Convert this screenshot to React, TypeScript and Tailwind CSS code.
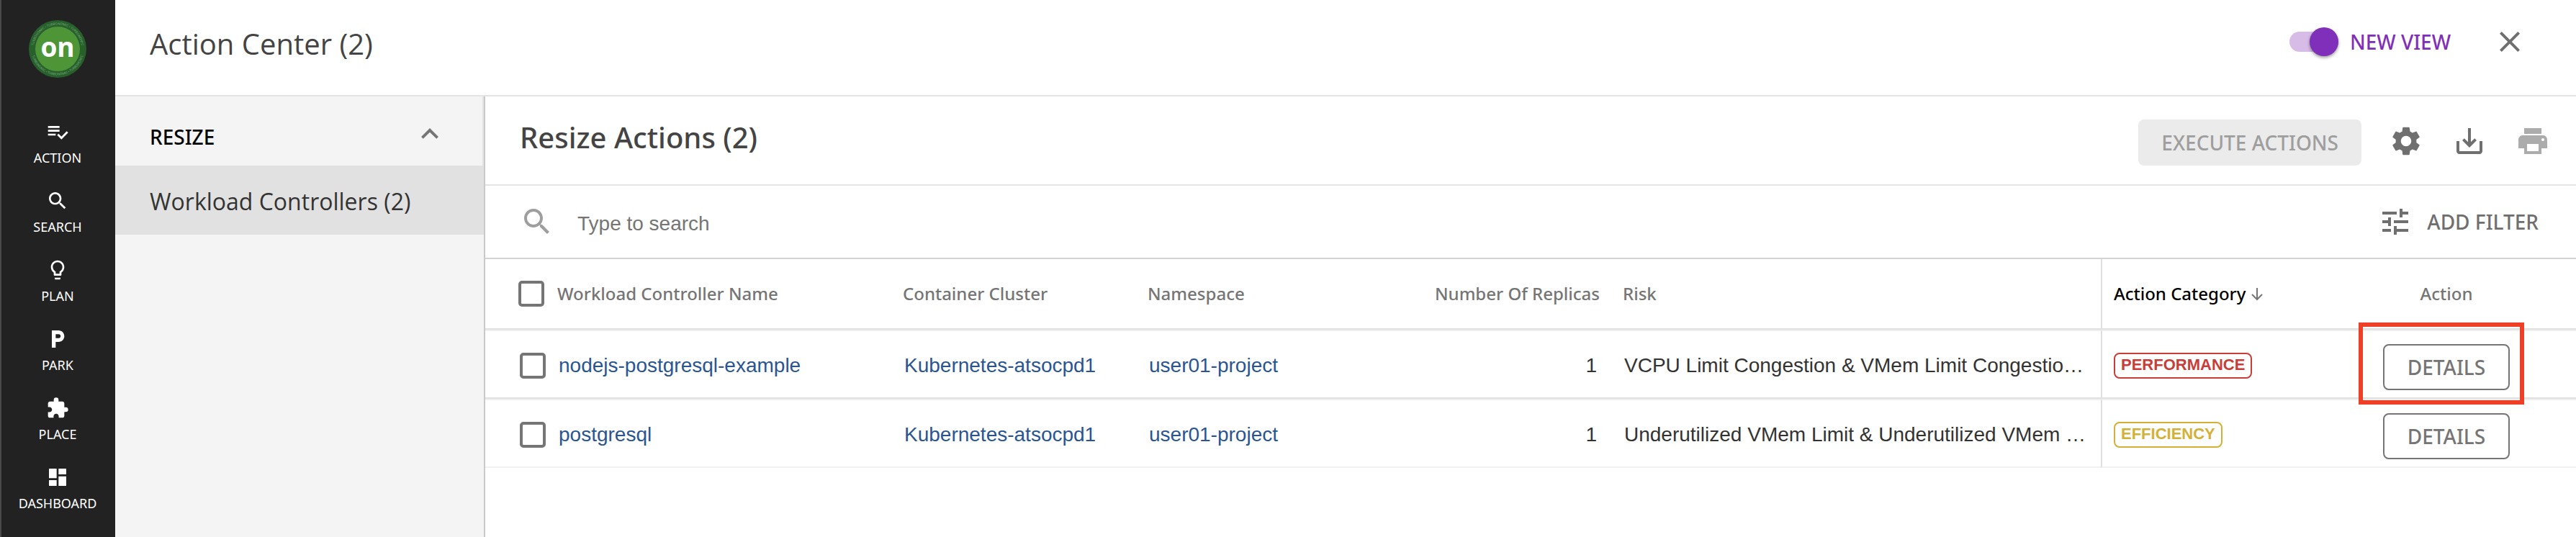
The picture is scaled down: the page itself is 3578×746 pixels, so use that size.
import React from "react";

const SANS = "font-['Open_Sans','Noto_Sans',sans-serif]";
const MEDIUM = "font-['Noto_Sans','Open_Sans',sans-serif] font-medium";

function Icon({ d, className }: { d: string; className: string }) {
  return (
    <svg viewBox="0 0 24 24" fill="currentColor" aria-hidden="true" className={`shrink-0 ${className}`}>
      <path d={d} />
    </svg>
  );
}

const SEARCH =
  "M15.5 14h-.79l-.28-.27C15.41 12.59 16 11.11 16 9.5 16 5.91 13.09 3 9.5 3S3 5.91 3 9.5 5.91 16 9.5 16c1.61 0 3.09-.59 4.23-1.57l.27.28v.79l5 4.99L20.49 19l-4.99-5zm-6 0C7.01 14 5 11.99 5 9.5S7.01 5 9.5 5 14 7.01 14 9.5 11.99 14 9.5 14z";
const CLOSE =
  "M19 6.41L17.59 5 12 10.59 6.41 5 5 6.41 10.59 12 5 17.59 6.41 19 12 13.41 17.59 19 19 17.59 13.41 12z";
const CHEVRON_UP = "M7.41 15.41L12 10.83l4.59 4.58L18 14l-6-6-6 6z";
const GEAR =
  "M19.14 12.94c.04-.3.06-.61.06-.94 0-.32-.02-.64-.07-.94l2.03-1.58a.49.49 0 0 0 .12-.61l-1.92-3.32a.488.488 0 0 0-.59-.22l-2.39.96c-.5-.38-1.03-.7-1.62-.94l-.36-2.54a.484.484 0 0 0-.48-.41h-3.84c-.24 0-.43.17-.47.41l-.36 2.54c-.59.24-1.13.57-1.62.94l-2.39-.96c-.22-.08-.47 0-.59.22L2.74 8.87c-.12.21-.08.47.12.61l2.03 1.58c-.05.3-.09.63-.09.94s.02.64.07.94l-2.03 1.58a.49.49 0 0 0-.12.61l1.92 3.32c.12.22.37.29.59.22l2.39-.96c.5.38 1.03.7 1.62.94l.36 2.54c.05.24.24.41.48.41h3.84c.24 0 .44-.17.47-.41l.36-2.54c.59-.24 1.13-.56 1.62-.94l2.39.96c.22.08.47 0 .59-.22l1.92-3.32c.12-.22.07-.47-.12-.61l-2.01-1.58zM12 15.6c-1.98 0-3.6-1.62-3.6-3.6s1.62-3.6 3.6-3.6 3.6 1.62 3.6 3.6-1.62 3.6-3.6 3.6z";
const DOWNLOAD =
  "M19 12v7H5v-7H3v7c0 1.1.9 2 2 2h14c1.1 0 2-.9 2-2v-7h-2zm-6 .67l2.59-2.58L17 11.5l-5 5-5-5 1.41-1.41L11 12.67V3h2z";
const PRINT =
  "M19 8H5c-1.66 0-3 1.34-3 3v6h4v4h12v-4h4v-6c0-1.66-1.34-3-3-3zm-3 11H8v-5h8v5zm3-7c-.55 0-1-.45-1-1s.45-1 1-1 1 .45 1 1-.45 1-1 1zm-1-9H6v4h12V3z";
const TUNE =
  "M3 17v2h6v-2H3zM3 5v2h10V5H3zm10 16v-2h8v-2h-8v-2h-2v6h2zM7 9v2H3v2h4v2h2V9H7zm14 4v-2H11v2h10zm-6-4h2V7h4V5h-4V3h-2v6z";
const ARROW_DOWN = "M12 4v16M5 13l7 7 7-7";

const NAV = [
  {
    label: "ACTION",
    d: "M14 10H2v2h12v-2zm0-4H2v2h12V6zM2 16h8v-2H2v2zm19.5-4.5L23 13l-6.99 7-4.51-4.5L13 14l3.01 3 5.49-5.5z",
  },
  { label: "SEARCH", d: SEARCH },
  {
    label: "PLAN",
    d: "M9 21c0 .55.45 1 1 1h4c.55 0 1-.45 1-1v-1H9v1zm3-19C8.14 2 5 5.14 5 9c0 2.38 1.19 4.47 3 5.74V17c0 .55.45 1 1 1h6c.55 0 1-.45 1-1v-2.26c1.81-1.27 3-3.36 3-5.74 0-3.86-3.14-7-7-7zm2.85 11.1l-.85.6V16h-4v-2.3l-.85-.6A4.997 4.997 0 0 1 7 9c0-2.76 2.24-5 5-5s5 2.24 5 5c0 1.63-.8 3.16-2.15 4.1z",
  },
  { label: "PARK", d: "M13 3H6v18h4v-6h3c3.31 0 6-2.69 6-6s-2.69-6-6-6zm.2 8H10V7h3.2c1.1 0 2 .9 2 2s-.9 2-2 2z" },
  {
    label: "PLACE",
    d: "M20.5 11H19V7c0-1.1-.9-2-2-2h-4V3.5a2.5 2.5 0 0 0-5 0V5H4c-1.1 0-1.99.9-1.99 2v3.8H3.5c1.49 0 2.7 1.21 2.7 2.7s-1.21 2.7-2.7 2.7H2V20c0 1.1.9 2 2 2h3.8v-1.5c0-1.49 1.21-2.7 2.7-2.7s2.7 1.21 2.7 2.7V22H17c1.1 0 2-.9 2-2v-4h1.5a2.5 2.5 0 0 0 0-5z",
  },
  { label: "DASHBOARD", d: "M3 13h8V3H3v10zm0 8h8v-6H3v6zm10 0h8V11h-8v10zm0-18v6h8V3h-8z" },
];

function Logo() {
  return (
    <svg viewBox="0 0 80 80" className="size-20" role="img" aria-label="Turbonomic">
      <defs>
        <path id="ring-top" d="M6.5 40a33.5 33.5 0 0 1 67 0" />
        <path id="ring-bottom" d="M3.5 40a36.5 36.5 0 0 0 73 0" />
      </defs>
      <circle cx="40" cy="40" r="40" fill="#28602c" />
      <circle cx="40" cy="40" r="31" fill="#4e9538" />
      <g fill="#7fae84" fontSize="4.4" textAnchor="middle" fontFamily="Open Sans, sans-serif">
        <text>
          <textPath href="#ring-top" startOffset="50%">TURBONOMIC • TURBONOMIC • TURBONOMIC</textPath>
        </text>
        <text>
          <textPath href="#ring-bottom" startOffset="50%">TURBONOMIC • TURBONOMIC • TURBONOMIC</textPath>
        </text>
      </g>
      <text x="40" y="51" textAnchor="middle" fill="#fff" fontSize="37" fontWeight="700" fontFamily="Open Sans, sans-serif">
        on
      </text>
    </svg>
  );
}

function Tick({ label }: { label: string }) {
  return (
    <input
      type="checkbox"
      aria-label={label}
      className="block size-9 appearance-none rounded-[5px] border-4 border-[#757575] bg-white checked:bg-[#757575]"
    />
  );
}

const ROWS = [
  {
    name: "nodejs-postgresql-example",
    risk: "VCPU Limit Congestion & VMem Limit Congestio…",
    category: "PERFORMANCE",
    tone: "border-[#c93d38] text-[#c93d38]",
    edge: "border-b-[#e0e0e0]",
    marked: true,
  },
  {
    name: "postgresql",
    risk: "Underutilized VMem Limit & Underutilized VMem …",
    category: "EFFICIENCY",
    tone: "border-[#d5b037] text-[#d5b037]",
    edge: "border-b-[#f0f0f0]",
    marked: false,
  },
];

function Row({ row }: { row: (typeof ROWS)[number] }) {
  const cell = `h-24 border-y-2 border-t-[#f0f0f0] p-0 ${row.edge}`;
  const link = "text-[#2a5592]";
  return (
    <tr>
      <td className={`${cell} pt-1 pl-12`}>
        <Tick label={`Select ${row.name}`} />
      </td>
      <td className={`${cell} pt-1 pl-0.5`}>
        <a href="#controller" className={link}>{row.name}</a>
      </td>
      <td className={`${cell} pt-1 pl-0.5`}>
        <a href="#cluster" className={link}>Kubernetes-atsocpd1</a>
      </td>
      <td className={`${cell} pt-1 pl-0.5`}>
        <a href="#namespace" className={link}>user01-project</a>
      </td>
      <td className={`${cell} pt-1 pr-1 text-right`}>1</td>
      <td className={`${cell} truncate pt-1 pr-2 pl-[34px]`}>{row.risk}</td>
      <td className={`${cell} border-l-2 border-l-[#e0e0e0] pt-1 pl-4`}>
        <span className={`inline-block h-9 rounded-lg border-2 px-2 align-middle text-[22px] leading-[30px] font-bold ${row.tone}`}>
          {row.category}
        </span>
      </td>
      <td className={`${cell} pt-2 text-center`}>
        <span className="relative inline-block align-middle">
          <button type="button" className={`${MEDIUM} block h-16 w-44 rounded-lg border-2 border-[#757575] text-[28px] text-[#757575]`}>
            DETAILS
          </button>
          {row.marked && (
            <span className="pointer-events-none absolute -top-[30px] -right-5 -bottom-5 -left-[34px] z-10 border-[6px] border-[#ee4026]" />
          )}
        </span>
      </td>
    </tr>
  );
}

export default function App() {
  const head = `h-[98px] border-b-2 border-[#e0e0e0] p-0 ${MEDIUM}`;
  return (
    <div className={`flex min-h-screen bg-white text-[#333] ${SANS}`}>
      <nav className="flex w-40 shrink-0 flex-col items-center border-l-2 border-[#4a4a4a] bg-[#222] pt-7 pr-0.5 text-white">
        <Logo />
        <ul className="mt-[59px] w-full">
          {NAV.map((n) => (
            <li key={n.label} className="h-24">
              <a
                href={`#${n.label.toLowerCase()}`}
                className="flex flex-col items-center gap-2 font-['Noto_Sans','Open_Sans',sans-serif] text-[18px] leading-6"
              >
                <Icon d={n.d} className="size-8" />
                {n.label}
              </a>
            </li>
          ))}
        </ul>
      </nav>

      <div className="flex min-w-0 flex-1 flex-col">
        <header className="flex h-[134px] items-start justify-between border-b-2 border-[#e4e4e4] pr-[68px] pl-12">
          <h1 className="pt-[31px] text-[40px] leading-[60px] text-[#444]">Action Center (2)</h1>
          <div className="flex items-center pt-[34px]">
            <label className={`flex items-center gap-4 text-[28px] text-[#7f2fb9] ${MEDIUM}`}>
              <span className="relative h-7 w-[68px] rounded-full bg-[#d7bce8]">
                <input type="checkbox" role="switch" defaultChecked className="absolute -top-1.5 right-0 size-10 appearance-none rounded-full bg-[#7f2fb9] shadow-[0_2px_4px_rgba(0,0,0,0.4)]" />
              </span>
              NEW VIEW
            </label>
            <button type="button" aria-label="Close" className="ml-[58px] text-[#6f6f6f]">
              <Icon d={CLOSE} className="size-12" />
            </button>
          </div>
        </header>

        <div className="flex flex-1">
          <aside className="w-[514px] shrink-0 border-r-2 border-[#c9c9c9] bg-[#f4f4f4]">
            <button type="button" className={`flex h-24 w-full items-center justify-between border-r-2 border-[#e4e4e4] pt-4 pr-[49px] pl-12 text-[28px] text-black ${MEDIUM}`}>
              RESIZE
              <Icon d={CHEVRON_UP} className="mb-2 size-12 text-[#757575]" />
            </button>
            <a href="#workload-controllers" className="flex h-24 items-center bg-[#e1e1e1] pt-1 pl-12 text-[32px]">
              Workload Controllers (2)
            </a>
          </aside>

          <main className="min-w-0 flex-1">
            <div className="flex h-[124px] items-start justify-between border-b-2 border-[#e4e4e4] pr-9 pl-12">
              <h2 className={`pt-[27px] text-[40px] leading-[60px] text-[#444] ${MEDIUM}`}>Resize Actions (2)</h2>
              <div className="flex items-start gap-10 pt-8 text-[#6f6f6f]">
                <button type="button" disabled className={`-mr-0.5 h-16 rounded-lg bg-[#ebebeb] px-8 text-[28px] text-[#9e9e9e] ${MEDIUM}`}>
                  EXECUTE ACTIONS
                </button>
                <button type="button" aria-label="Settings" className="pt-1.5"><Icon d={GEAR} className="size-12" /></button>
                <button type="button" aria-label="Download" className="pt-1.5"><Icon d={DOWNLOAD} className="size-12" /></button>
                <button type="button" aria-label="Print" className="pt-1.5 text-[#acacac]"><Icon d={PRINT} className="size-12" /></button>
              </div>
            </div>

            <div className="flex h-[102px] items-center justify-between border-b-2 border-[#d4d4d4] pr-[52px] pl-12">
              <label className="flex flex-1 items-center gap-8 text-[#9e9e9e]">
                <Icon d={SEARCH} className="size-12" />
                <input
                  type="search"
                  aria-label="Search"
                  placeholder="Type to search"
                  className="flex-1 pt-1.5 font-['Liberation_Sans',Arial,sans-serif] text-[28px] text-[#333] outline-none placeholder:text-[#757575]"
                />
              </label>
              <button type="button" className={`flex items-center gap-5 text-[28px] text-[#6f6f6f] ${MEDIUM}`}>
                <Icon d={TUNE} className="size-12" />
                ADD FILTER
              </button>
            </div>

            <table className="w-full table-fixed border-separate border-spacing-0 text-left">
              <colgroup>
                <col className="w-[100px]" />
                <col className="w-[480px]" />
                <col className="w-[340px]" />
                <col className="w-[340px]" />
                <col className="w-[288px]" />
                <col />
                <col className="w-[300px]" />
                <col className="w-[360px]" />
              </colgroup>
              <thead className="text-2xl text-[#757575]">
                <tr>
                  <th className={`${head} pl-[46px]`}><Tick label="Select all" /></th>
                  <th className={head}>Workload Controller Name</th>
                  <th className={head}>Container Cluster</th>
                  <th className={head}>Namespace</th>
                  <th className={`${head} text-right`}>Number Of Replicas</th>
                  <th className={`${head} pl-8`}>Risk</th>
                  <th className={`${head} border-l-2 pl-4 text-black`}>
                    <button type="button" className="flex items-center gap-1">
                      Action Category
                      <svg viewBox="0 0 24 24" fill="none" stroke="#757575" strokeWidth="2" className="size-6" aria-hidden="true">
                        <path d={ARROW_DOWN} />
                      </svg>
                    </button>
                  </th>
                  <th className={`${head} text-center`}>Action</th>
                </tr>
              </thead>
              <tbody className="font-['Liberation_Sans',Arial,sans-serif] text-[28px] leading-8">
                {ROWS.map((r) => (
                  <Row key={r.name} row={r} />
                ))}
              </tbody>
            </table>
          </main>
        </div>
      </div>
    </div>
  );
}
